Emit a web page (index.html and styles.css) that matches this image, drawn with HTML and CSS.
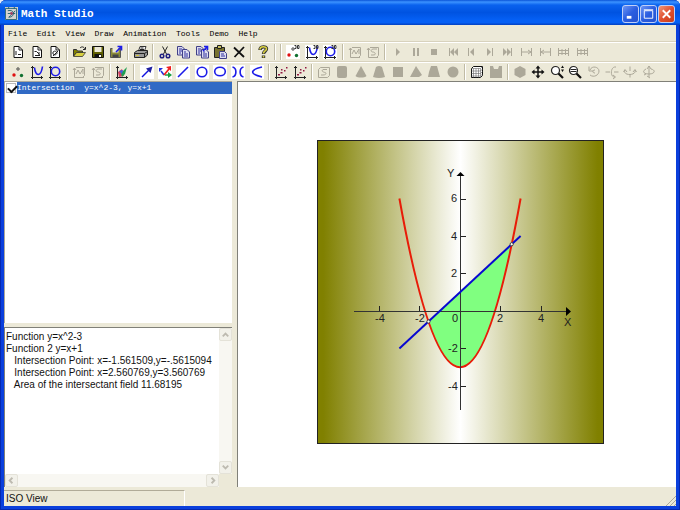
FILE: index.html
```html
<!DOCTYPE html>
<html lang="en">
<head>
  <meta charset="UTF-8">
  <meta name="viewport" content="width=device-width, initial-scale=1.0">
  <title>Math Studio</title>
  <link rel="stylesheet" href="styles.css">
</head>
<body>
  <!-- icon sprites -->
  <svg class="sprites" aria-hidden="true">
    <symbol id="page" viewBox="0 0 16 16"><path class="paper" d="M4 2.5h5l3.5 3.5v7.5H4z"/><path class="thin" d="M9 2.5v3.5h3.5"/></symbol>
    <symbol id="new" viewBox="0 0 16 16"><use href="#page"/><path d="M6 7v4M8 10.5h3" class="thin"/></symbol>
    <symbol id="new2" viewBox="0 0 16 16"><use href="#page"/><path d="M5.5 7.5h2l3 3M6 11.5h5M10 8v3" class="thin"/></symbol>
    <symbol id="new3" viewBox="0 0 16 16"><use href="#page"/><path d="M6 8c2-2 4 0 4 1s-2 3-4 1zM6 12l5-5" class="thin"/></symbol>
    <symbol id="open" viewBox="0 0 16 16"><path fill="#808000" stroke="#333" d="M2.5 12V5.5h3l1 1.5h5v2H5z"/><path fill="#d8d040" stroke="#333" stroke-width=".8" d="M2.5 12.5l3-4h9l-3 4z"/><path class="thin" d="M9 4c2-2 4-1 5 1M14.5 3v2.5H12"/></symbol>
    <symbol id="save" viewBox="0 0 16 16"><path fill="#606000" stroke="#111" d="M2.5 2.5h11v11h-11z"/><path fill="#ece9d8" d="M4.5 3h7v5h-7z"/><path fill="#111" d="M4.5 10h7v3.5h-7z"/><path fill="#fff" d="M9 11h2v2H9z"/></symbol>
    <symbol id="export" viewBox="0 0 16 16"><path fill="#8a8a38" stroke="#555" d="M2.5 4.5h10v9h-10z"/><path fill="#ece9d8" d="M4.5 4h6v4.5h-6z"/><path fill="#444" d="M4.5 10.5h6v3h-6z"/><path class="blue" d="M8 8l5-5M9.5 2.5h4v4"/></symbol>
    <symbol id="print" viewBox="0 0 16 16"><path fill="#fff" stroke="#333" d="M5.5 7l1.5-4.5h6L11.5 7"/><path fill="#999" stroke="#222" d="M1.5 8.5l3-2h10v4.5l-3 2.5h-10z"/><path d="M2 9.5h9.5l3-2M11.5 9.5v4M7.5 4h3M7 5.5h4" class="thin"/><path stroke="#d0c030" d="M3 11.5h3"/></symbol>
    <symbol id="cut" viewBox="0 0 16 16"><path stroke="#222" fill="none" d="M5.5 2.5l4 7.5M10.5 2.5L6.5 10"/><g class="navy"><circle cx="5" cy="12" r="1.8"/><circle cx="11" cy="12" r="1.8"/></g></symbol>
    <symbol id="copy" viewBox="0 0 16 16"><path class="sheet" d="M2.5 2.5H7L9.5 5v6h-7z"/><path class="sheet" d="M7.5 5.5H12L14.5 8v6h-7z"/><path class="navyline" d="M4 5h3M4 7h3M4 9h2M9 8h2M9 10h4M9 12h4"/></symbol>
    <symbol id="copyto" viewBox="0 0 16 16"><use href="#copy"/><path fill="#ece9d8" d="M10 0h6v5h-6z"/><path class="blue" d="M9 7l4-4M10 2.5h3.5V6"/></symbol>
    <symbol id="paste" viewBox="0 0 16 16"><path fill="#77722f" stroke="#222" d="M2.5 3.5h10v10h-10z"/><path fill="#c8c060" stroke="#222" d="M5.5 1.5h4v3h-4z"/><path class="sheet" d="M7.5 7.5h5l2 2v5h-7z"/><path class="navyline" d="M9 10h3M9 12h4"/></symbol>
    <symbol id="del" viewBox="0 0 16 16"><path fill="none" stroke="#111" stroke-width="1.8" d="M3 3.5l10 9.5M13 3L3.5 13"/></symbol>
    <symbol id="help" viewBox="0 0 16 16"><path fill="none" stroke="#333" stroke-width="3.4" d="M5 6c0-4 6.5-4 6.5-1.2C11.500 7.200 8.500 7 8.500 10M8.500 11.500v2.500"/><path fill="none" stroke="#d8d040" stroke-width="1.6" d="M5 5.500c0-3.500 6.500-3.500 6.500-.8C11.500 7 8.500 7 8.500 9.500M8.500 12v1.500"/></symbol>
    <symbol id="dots" viewBox="0 0 16 16"><circle cx="8" cy="5" r="1.2" fill="none" stroke="#444"/><circle cx="4" cy="11" r="1.7" fill="#e01010"/><circle cx="11.5" cy="11.5" r="1.7" fill="#107030"/></symbol>
    <symbol id="axes" viewBox="0 0 16 16"><path fill="none" stroke="#222" d="M3.5 2v11.5H14M2 3.5h3M12.5 12v3M2 13.5h1.500V15"/></symbol>
    <symbol id="curve" viewBox="0 0 16 16"><use href="#axes"/><path class="blue" d="M5.5 3.5c1 10 6.5 9 8-1"/></symbol>
    <symbol id="ring" viewBox="0 0 16 16"><use href="#axes"/><circle class="blue" cx="8.5" cy="7.5" r="4.2"/></symbol>
    <symbol id="d3" viewBox="0 0 16 16"><path stroke="#333" fill="none" d="M9.500 1.500h1.500v3H9.500M12.500 1.500v3h1.500v-3z"/></symbol>
    <symbol id="dots3" viewBox="0 0 16 16"><use href="#back"/><use href="#dots"/><use href="#d3"/></symbol>
    <symbol id="curve3" viewBox="0 0 16 16"><use href="#back"/><use href="#curve"/><use href="#d3"/></symbol>
    <symbol id="ring3" viewBox="0 0 16 16"><use href="#back"/><use href="#ring"/><use href="#d3"/></symbol>
    <symbol id="back" viewBox="0 0 16 16"><rect class="white" x="1" y="1" width="14" height="14"/></symbol>
    <symbol id="gaxis" viewBox="0 0 16 16"><path class="gline" d="M3.5 4v9.500H13M2 6l1.5-2L5 6M5 3.5h8.500v8M13.500 11.500l-2 2"/></symbol>
    <symbol id="gwave" viewBox="0 0 16 16"><use href="#gaxis"/><path class="gline" d="M5 10l2-4 2 4 3-5v5"/></symbol>
    <symbol id="gspiral" viewBox="0 0 16 16"><use href="#gaxis"/><path class="gline" d="M12 5H8c-3 1-2 3 0 3s4 3 0 3H6"/></symbol>
    <symbol id="surface" viewBox="0 0 16 16"><path fill="#d04060" d="M4 8l4-3 2 7-5 1z"/><path fill="#20a050" d="M7 9l6-6-2 7-3 3z"/><path fill="#4060e0" d="M5 7l4-1-1 4z"/><use href="#axes"/></symbol>
    <symbol id="vector" viewBox="0 0 16 16"><use href="#back"/><path stroke="#1010e0" stroke-width="1.4" d="M3 13l8-8"/><path fill="#2020a0" d="M13.5 2.5l-2 6.500-4.500-4.500z"/></symbol>
    <symbol id="vectors" viewBox="0 0 16 16"><use href="#back"/><path stroke="#18a040" stroke-width="1.5" d="M8 11h5"/><path fill="#18a040" d="M15 11l-4 3V8z"/><path stroke="#2030e0" stroke-width="1.5" d="M7 11L4 7"/><path fill="#2030e0" d="M2 4h4L2 8z"/><path stroke="#f02020" stroke-width="1.8" d="M7 11l5-6"/><path fill="#f02020" d="M14 2v5L9 3z"/></symbol>
    <symbol id="line" viewBox="0 0 16 16"><use href="#back"/><path class="blue" d="M3 13L13 3"/></symbol>
    <symbol id="circle" viewBox="0 0 16 16"><use href="#back"/><circle class="blue" cx="8" cy="8" r="4.8"/></symbol>
    <symbol id="ellipse" viewBox="0 0 16 16"><use href="#back"/><ellipse class="blue" cx="8" cy="7.5" rx="5.3" ry="4.3"/></symbol>
    <symbol id="hyper" viewBox="0 0 16 16"><use href="#back"/><path class="blue" d="M2.5 3c4.5 1 4.5 9 0 10M13.5 3c-4.500 1-4.500 9 0 10"/></symbol>
    <symbol id="para" viewBox="0 0 16 16"><use href="#back"/><path class="blue" d="M13 3C.5 6 .5 10 13 13"/></symbol>
    <symbol id="scatter" viewBox="0 0 16 16"><use href="#axes"/><path fill="#901840" d="M5 10h2v1.500H5zM7.500 8h2v1.500h-2zM8 5h1.500v1.500H8zM11 6h1.500v1.500H11zM13 3h1.500v1.500H13z"/></symbol>
    <symbol id="play" viewBox="0 0 16 16"><path class="gfill" d="M6 4l4 4-4 4z"/></symbol>
    <symbol id="pause" viewBox="0 0 16 16"><path class="gfill" d="M5 4h2v8H5zM9 4h2v8H9z"/></symbol>
    <symbol id="stop" viewBox="0 0 16 16"><path class="gfill" d="M5 5h6v6H5z"/></symbol>
    <symbol id="first" viewBox="0 0 16 16"><path class="gfill" d="M4 4h1v8H4zM9 4v8L5 8zM13 4v8L9 8z"/></symbol>
    <symbol id="prev" viewBox="0 0 16 16"><path class="gfill" d="M5 4h1v8H5zM11 4v8L7 8z"/></symbol>
    <symbol id="next" viewBox="0 0 16 16"><path class="gfill" d="M10 4h1v8h-1zM5 4v8l4-4z"/></symbol>
    <symbol id="last" viewBox="0 0 16 16"><path class="gfill" d="M11 4h1v8h-1zM3 4v8l4-4zM7 4v8l4-4z"/></symbol>
    <symbol id="toend" viewBox="0 0 16 16"><path class="gline" d="M3.5 4v8M13.5 4v8M4 8h9M10 6l3 2-3 2"/></symbol>
    <symbol id="tostart" viewBox="0 0 16 16"><path class="gline" d="M3.5 4v8M13.5 4v8M4 8h9M7 6L4 8l3 2"/></symbol>
    <symbol id="film" viewBox="0 0 16 16"><path class="gline" d="M3.5 4v8M13.5 4v8M3 6.5h11M3 9.5h11M7 5v6M10.5 5v6"/></symbol>
    <symbol id="gbox" viewBox="0 0 16 16"><path class="gline" d="M2.5 5.5l2-2h9v8l-2 2h-9zM11 5.500H7c-2 1.500 0 2.500 2 3s1 2.500-2 2.500H5"/></symbol>
    <symbol id="cyl" viewBox="0 0 16 16"><rect class="gfill" x="3" y="2" width="10" height="12" rx="2"/></symbol>
    <symbol id="cone" viewBox="0 0 16 16"><path class="gfill" d="M8 2l5.5 10c-2 2-9 2-11 0z"/></symbol>
    <symbol id="frustum" viewBox="0 0 16 16"><path class="gfill" d="M5 3q3-2 6 0l3 10q-6 2-12 0z"/></symbol>
    <symbol id="cube" viewBox="0 0 16 16"><path class="gfill" d="M3 3h10v10H3z"/></symbol>
    <symbol id="pyramid" viewBox="0 0 16 16"><path class="gfill" d="M8 2l6 9-3 2H2z"/></symbol>
    <symbol id="trap" viewBox="0 0 16 16"><path class="gfill" d="M5 2h6l3 11H2l1-5z"/></symbol>
    <symbol id="sphere" viewBox="0 0 16 16"><circle class="gfill" cx="8" cy="8" r="5.5"/></symbol>
    <symbol id="mesh" viewBox="0 0 16 16"><path fill="#fff" stroke="#111" d="M2.5 4.5l2-2h9v9l-2 2h-9z"/><path stroke="#666" stroke-width=".6" fill="none" d="M4.500 4.500v9M7 4.500v9M9.500 4.500v9M2.500 4.500h9v9M11.500 4.500l2-2M2.500 7h9l2-2M2.500 9.500h9l2-2M2.500 12h9l2-2"/></symbol>
    <symbol id="clip" viewBox="0 0 16 16"><path class="gfill" d="M2 2h3l1 3h4l1-3h3v12H2z"/></symbol>
    <symbol id="hex" viewBox="0 0 16 16"><path class="gfill" d="M8 2l5.5 3v6L8 14l-5.500-3V5z"/></symbol>
    <symbol id="move" viewBox="0 0 16 16"><path stroke="#111" stroke-width="1.5" d="M8 3v10M3 8h10"/><path fill="#111" d="M8 1.500l2.500 3h-5zM8 14.500l2.500-3h-5zM1.500 8l3-2.500v5zM14.500 8l-3-2.500v5z"/></symbol>
    <symbol id="lens" viewBox="0 0 16 16"><circle cx="6.5" cy="6.5" r="4" fill="#fff" stroke="#222" stroke-width="1.2"/><path stroke="#111" stroke-width="2.2" d="M9.5 9.5l4.500 4.500"/></symbol>
    <symbol id="zoom" viewBox="0 0 16 16"><use href="#lens"/><path fill="#111" d="M12 4l1.500-2.500L15 4zM12 5.500l1.500 2.500L15 5.500z"/></symbol>
    <symbol id="zoomout" viewBox="0 0 16 16"><use href="#lens"/><path stroke="#222" d="M3.5 5.5h6M3.5 7.5h6"/></symbol>
    <symbol id="undo" viewBox="0 0 16 16"><path class="gline" d="M4 6c2-5 9-3 9 1s-5 7-9 4M3 2.5V7h4.500M9 6c-3 0-3 3 0 3"/></symbol>
    <symbol id="rotx" viewBox="0 0 16 16"><path class="gline" d="M1.5 8H6M10 8h4.500M12 3C6 2 6 14 11 13M9 11l2.500 2L9 15"/></symbol>
    <symbol id="roty" viewBox="0 0 16 16"><path class="gline" d="M8 2.500V7M8 10v3.500M3 6c-3 6 12 6 10 0M1.5 8L3 5.500 5 8M11 8l2-2.500L14.500 8"/></symbol>
    <symbol id="rotz" viewBox="0 0 16 16"><path class="gline" d="M8 2v11M8 2L6 5M8 2l2 3M5 5C1 7 2 10 8 10s7-4 2-5M6 12l3 2M3 11l2-1"/></symbol>
  </svg>

  <div class="window">
    <header class="titlebar">
      <svg class="app-icon" viewBox="0 0 14 14"><rect width="14" height="14" fill="#d4d4d0"/><path fill="none" stroke="#206070" d="M.5 13.5V1.5h12v12zM4 0v2M10 0v2M3 4c8-2 8 7 1 7 3-3 5-4 7-7M3 7h8"/><circle cx="7" cy="7" r="1.5" fill="#a04060"/></svg>
      <h1>Math Studio</h1>
      <div class="window-buttons">
        <button aria-label="Minimize"><svg viewBox="0 0 16 16"><path fill="#fff" d="M4 10h5v3H4z"/></svg></button>
        <button aria-label="Maximize"><svg viewBox="0 0 16 16"><path fill="none" stroke="#fff" d="M3.5 4.5h9v8h-9zM3 3.5h10"/></svg></button>
        <button class="close" aria-label="Close"><svg viewBox="0 0 16 16"><path stroke="#fff" stroke-width="2" d="M4 4l8 8M12 4l-8 8"/></svg></button>
      </div>
    </header>

    <nav class="menubar">
      <button>File</button>
      <button>Edit</button>
      <button>View</button>
      <button>Draw</button>
      <button>Animation</button>
      <button>Tools</button>
      <button>Demo</button>
      <button>Help</button>
    </nav>

    <div class="toolbar">
      <div class="tools main-tools">
        <button aria-label="New"><svg><use href="#new"/></svg></button>
        <button aria-label="New 2D"><svg><use href="#new2"/></svg></button>
        <button aria-label="New 3D"><svg><use href="#new3"/></svg></button>
        <i class="sep"></i>
        <button aria-label="Open"><svg><use href="#open"/></svg></button>
        <button aria-label="Save"><svg><use href="#save"/></svg></button>
        <button aria-label="Export"><svg><use href="#export"/></svg></button>
        <i class="sep"></i>
        <button aria-label="Print"><svg><use href="#print"/></svg></button>
        <i class="sep"></i>
        <button aria-label="Cut"><svg><use href="#cut"/></svg></button>
        <button aria-label="Copy"><svg><use href="#copy"/></svg></button>
        <button aria-label="Copy picture"><svg><use href="#copyto"/></svg></button>
        <button aria-label="Paste"><svg><use href="#paste"/></svg></button>
        <button aria-label="Delete"><svg><use href="#del"/></svg></button>
        <i class="sep"></i>
        <button aria-label="Help"><svg><use href="#help"/></svg></button>
        <i class="sep"></i>
        <i class="sep"></i>
        <button aria-label="3D point"><svg><use href="#dots3"/></svg></button>
        <button aria-label="3D function"><svg><use href="#curve3"/></svg></button>
        <button aria-label="3D parametric"><svg><use href="#ring3"/></svg></button>
        <i class="sep"></i>
        <button disabled aria-label="Space curve"><svg><use href="#gwave"/></svg></button>
        <button disabled aria-label="Space surface"><svg><use href="#gspiral"/></svg></button>
        <i class="sep"></i>
        <button disabled aria-label="Play"><svg><use href="#play"/></svg></button>
        <button disabled aria-label="Pause"><svg><use href="#pause"/></svg></button>
        <button disabled aria-label="Stop"><svg><use href="#stop"/></svg></button>
        <button disabled aria-label="First frame"><svg><use href="#first"/></svg></button>
        <button disabled aria-label="Previous frame"><svg><use href="#prev"/></svg></button>
        <button disabled aria-label="Next frame"><svg><use href="#next"/></svg></button>
        <button disabled aria-label="Last frame"><svg><use href="#last"/></svg></button>
        <button disabled aria-label="Forward"><svg><use href="#toend"/></svg></button>
        <button disabled aria-label="Backward"><svg><use href="#tostart"/></svg></button>
        <button disabled aria-label="Loop"><svg><use href="#film"/></svg></button>
        <button disabled aria-label="Frames"><svg><use href="#film"/></svg></button>
      </div>
    </div>

    <div class="toolbar">
      <div class="tools draw-tools">
        <button aria-label="Points"><svg><use href="#dots"/></svg></button>
        <button aria-label="Function"><svg><use href="#curve"/></svg></button>
        <button aria-label="Parametric"><svg><use href="#ring"/></svg></button>
        <i class="sep"></i>
        <button disabled aria-label="Wave"><svg><use href="#gwave"/></svg></button>
        <button disabled aria-label="Spiral"><svg><use href="#gspiral"/></svg></button>
        <i class="sep"></i>
        <button aria-label="Surface"><svg><use href="#surface"/></svg></button>
        <i class="sep"></i>
        <button aria-label="Vector"><svg><use href="#vector"/></svg></button>
        <button aria-label="Vectors"><svg><use href="#vectors"/></svg></button>
        <button aria-label="Line"><svg><use href="#line"/></svg></button>
        <button aria-label="Circle"><svg><use href="#circle"/></svg></button>
        <button aria-label="Ellipse"><svg><use href="#ellipse"/></svg></button>
        <button aria-label="Hyperbola"><svg><use href="#hyper"/></svg></button>
        <button aria-label="Parabola"><svg><use href="#para"/></svg></button>
        <i class="sep"></i>
        <button aria-label="Scatter"><svg><use href="#scatter"/></svg></button>
        <button aria-label="Fit"><svg><use href="#scatter"/></svg></button>
        <i class="sep"></i>
        <button disabled aria-label="Plane"><svg><use href="#gbox"/></svg></button>
        <button disabled aria-label="Cylinder"><svg><use href="#cyl"/></svg></button>
        <button disabled aria-label="Cone"><svg><use href="#cone"/></svg></button>
        <button disabled aria-label="Frustum"><svg><use href="#frustum"/></svg></button>
        <button disabled aria-label="Prism"><svg><use href="#cube"/></svg></button>
        <button disabled aria-label="Pyramid"><svg><use href="#pyramid"/></svg></button>
        <button disabled aria-label="Pyramid frustum"><svg><use href="#trap"/></svg></button>
        <button disabled aria-label="Sphere"><svg><use href="#sphere"/></svg></button>
        <i class="sep"></i>
        <button aria-label="Grid"><svg><use href="#mesh"/></svg></button>
        <button disabled aria-label="Clipping"><svg><use href="#clip"/></svg></button>
        <i class="sep"></i>
        <button disabled aria-label="Solid"><svg><use href="#hex"/></svg></button>
        <button aria-label="Move"><svg><use href="#move"/></svg></button>
        <button aria-label="Zoom"><svg><use href="#zoom"/></svg></button>
        <button aria-label="Zoom out"><svg><use href="#zoomout"/></svg></button>
        <button disabled aria-label="Rotate"><svg><use href="#undo"/></svg></button>
        <button disabled aria-label="Rotate X"><svg><use href="#rotx"/></svg></button>
        <button disabled aria-label="Rotate Y"><svg><use href="#roty"/></svg></button>
        <button disabled aria-label="Rotate Z"><svg><use href="#rotz"/></svg></button>
      </div>
    </div>

    <main class="workspace">
      <aside class="sidebar">
        <ul class="object-list">
          <li>
            <input type="checkbox" id="obj1" checked>
            <label for="obj1">Intersection  y=x^2-3, y=x+1</label>
          </li>
        </ul>
        <div class="output">
          <textarea readonly wrap="off" aria-label="Result">Function y=x^2-3
Function 2 y=x+1
   Intersection Point: x=-1.561509,y=-.5615094
   Intersection Point: x=2.560769,y=3.560769
   Area of the intersectant field 11.68195</textarea>
          <div class="scroll vertical">
            <button disabled aria-label="Up"><svg viewBox="0 0 12 12"><path d="M3 8l3-3 3 3"/></svg></button>
            <button disabled aria-label="Down"><svg viewBox="0 0 12 12"><path d="M3 4l3 3 3-3"/></svg></button>
          </div>
          <div class="scroll horizontal">
            <button disabled aria-label="Left"><svg viewBox="0 0 12 12"><path d="M7 3L4 6l3 3"/></svg></button>
            <button disabled aria-label="Right"><svg viewBox="0 0 12 12"><path d="M5 3l3 3-3 3"/></svg></button>
          </div>
        </div>
      </aside>

      <section class="canvas">
        <svg class="plot" viewBox="0 0 287 304">
          <defs>
            <linearGradient id="bg">
              <stop offset="0.02" stop-color="#808000"/>
              <stop offset="0.5" stop-color="#fff"/>
              <stop offset="0.98" stop-color="#808000"/>
            </linearGradient>
          </defs>
          <rect x="0.5" y="0.5" width="286" height="303" fill="url(#bg)" stroke="#222"/>
          <!-- area between the curves -->
          <path fill="#80ff80" d="M111.5 181.5Q153.1 302.2 194.7 104.2z"/>
          <path class="parabola" d="M82.4 58.5Q143 396 203.6 58.5"/>
          <path class="axis" d="M37 171.5h212M143.5 36v234"/>
          <path class="tick" d="M62.5 166v5M102.5 166v5M183.5 166v5M224.5 166v5M144 59.5h5M144 96.5h5M144 133.5h5M144 208.5h5M144 246.5h5"/>
          <path d="M249 167l5 4.5-5 4.5zM139.5 36l4-4 4 4z"/>
          <path class="straight" d="M82.4 208.5L203.6 96"/>
          <g class="point">
            <circle cx="111.5" cy="181.5" r="1.6"/>
            <circle cx="194.7" cy="104.2" r="1.6"/>
          </g>
          <g class="labels">
            <text x="130" y="37">Y</text>
            <text x="247" y="186">X</text>
            <text x="58" y="182">-4</text>
            <text x="98" y="182">-2</text>
            <text x="135" y="182">0</text>
            <text x="180" y="182">2</text>
            <text x="221" y="182">4</text>
            <text x="134" y="62">6</text>
            <text x="134" y="100">4</text>
            <text x="134" y="137">2</text>
            <text x="131" y="212">-2</text>
            <text x="131" y="250">-4</text>
          </g>
        </svg>
      </section>
    </main>

    <footer class="statusbar">
      <span class="panel">ISO View</span>
      <svg class="grip" viewBox="0 0 12 12"><path d="M2 12L12 2M6 12l6-6M10 12l2-2"/></svg>
    </footer>
  </div>
</body>
</html>
```
FILE: styles.css
```css
* {
  box-sizing: border-box;
}

body {
  margin: 0;
  background: #e4ecf8;
  color: #111;
  font-family: "Liberation Sans", Arial, sans-serif;
  font-size: 10px;
}

button {
  margin: 0;
  padding: 0;
  border: 0;
  background: none;
  color: inherit;
  font: inherit;
}

.sprites {
  position: absolute;
  width: 0;
  height: 0;
}

.window {
  display: flex;
  flex-direction: column;
  min-height: 100vh;
  padding: 0 4px 4px;
  background: #0a3fdc;
  border-radius: 6px 6px 0 0;
  box-shadow: inset 0 0 0 1px #0528b0;
}

/* title bar */
.titlebar {
  display: flex;
  align-items: center;
  height: 25px;
  margin: 0 -4px;
  padding: 2px 5px 0;
  border-radius: 6px 6px 0 0;
  background: linear-gradient(#0a54d8, #3c93ff 8%, #0a62ee 20%, #0053e1 50%, #0560f5 80%, #0560f5 90%, #0340c0);
}

.app-icon {
  width: 13px;
  height: 13px;
}

.titlebar h1 {
  flex: 1;
  margin: 0 0 0 3px;
  color: #fff;
  font: bold 11px "Liberation Mono", "Courier New", monospace;
}

.window-buttons {
  display: flex;
  gap: 1px;
}

.window-buttons button {
  width: 17px;
  height: 18px;
  border: 1px solid #c0d0f8;
  border-radius: 3px;
  background: linear-gradient(135deg, #6d95f4, #2a5de0 50%, #2452d0);
}

.window-buttons .close {
  background: linear-gradient(135deg, #f09878, #e05030 50%, #c83c18);
}

.window-buttons svg {
  display: block;
  width: 15px;
  height: 16px;
}

/* menu and toolbars */
.menubar {
  display: flex;
  gap: 2ch;
  align-items: center;
  height: 16px;
  padding-left: 4px;
  background: #ece9d8;
  color: #000;
  font: 8px "Liberation Mono", "Courier New", monospace;
}

.toolbar {
  height: 20px;
  padding: 1px 5px 0;
  border-top: 1px solid #d8d2bd;
  background: #ece9d8;
  box-shadow: inset 0 1px #fff;
}

.tools {
  display: flex;
  align-items: center;
  height: 18px;
}

.main-tools {
  max-width: 582px;
}

.draw-tools {
  max-width: 649px;
}

.tools button {
  flex: 1;
  height: 16px;
}

.tools svg {
  display: block;
  width: 16px;
  height: 16px;
  margin: 0 auto;
}

.sep {
  width: 2px;
  height: 16px;
  margin: 0 2px;
  border-left: 1px solid #c0bba5;
  border-right: 1px solid #fff;
}

.paper {
  fill: #fff;
  stroke: #111;
}

.thin {
  fill: none;
  stroke: #222;
}

.blue {
  fill: none;
  stroke: #1c1ce8;
  stroke-width: 1.6;
}

.navy {
  fill: none;
  stroke: #202080;
  stroke-width: 1.5;
}

.navyline {
  stroke: #3030a0;
}

.sheet {
  fill: #dcdcf0;
  stroke: #404088;
}

.white {
  fill: #fff;
}

.gline {
  fill: none;
  stroke: #aca899;
}

.gfill {
  fill: #aca899;
}

/* work area */
.workspace {
  flex: 1;
  display: grid;
  grid-template-columns: 233fr 439fr;
  background: #ece9d8;
}

.sidebar {
  display: grid;
  grid-template-rows: 242fr 160fr;
  gap: 4px;
  padding-right: 5px;
}

.object-list {
  margin: 0;
  padding: 0;
  border: 1px solid #aca899;
  border-width: 1px 0 0 1px;
  background: #fff;
  list-style: none;
}

.object-list li {
  display: flex;
  align-items: center;
  height: 12px;
  font: 8px "Liberation Mono", "Courier New", monospace;
}

.object-list input {
  appearance: none;
  width: 10px;
  height: 10px;
  margin: 0 1px;
  border: 1px solid #bbb;
  background: #fff;
}

.object-list input:checked::after {
  content: "";
  display: block;
  width: 7px;
  height: 4px;
  margin: 1px;
  border: solid #111;
  border-width: 0 0 2px 2px;
  transform: rotate(-45deg);
}

.object-list label {
  flex: 1;
  height: 12px;
  line-height: 12px;
  background: #316ac5;
  color: #fff;
  white-space: pre;
}

.output {
  display: grid;
  grid-template-columns: 1fr 13px;
  grid-template-rows: 1fr 13px;
  border: 1px solid #808078;
  border-width: 1px 0 0 1px;
}

.output textarea {
  width: 100%;
  height: 100%;
  margin: 0;
  padding: 3px 0 0 1px;
  border: 0;
  outline: 0;
  resize: none;
  overflow: hidden;
  background: #fff;
  color: #111;
  font: 10px/12px "Liberation Sans", Arial, sans-serif;
}

.scroll {
  display: flex;
  justify-content: space-between;
  background: #f8f7f2;
}

.vertical {
  flex-direction: column;
}

.scroll button {
  width: 13px;
  height: 13px;
  border: 1px solid #e4e2d8;
  border-radius: 2px;
  background: #f2f1ea;
}

.scroll svg {
  display: block;
  width: 11px;
  height: 11px;
  fill: none;
  stroke: #bdbab0;
  stroke-width: 2;
}

.canvas {
  display: grid;
  place-items: center;
  padding: 14px 0 0 6px;
  border: 1px solid #808078;
  border-width: 1px 0 0 1px;
  background: #fff;
}

.plot {
  width: 287px;
  height: 304px;
}

.parabola,
.straight {
  fill: none;
  stroke: #e81c08;
  stroke-width: 2;
}

.straight {
  stroke: #0808d0;
}

.axis {
  stroke: #333;
}

.tick {
  stroke: #222;
}

.point {
  fill: #fff;
  stroke: #444;
}

.labels {
  fill: #222;
  font-size: 11px;
}

/* status bar */
.statusbar {
  display: flex;
  justify-content: space-between;
  align-items: flex-end;
  height: 19px;
  padding-top: 3px;
  background: #ece9d8;
}

.panel {
  width: 27%;
  height: 16px;
  padding-left: 2px;
  border: 1px solid #b0ab98;
  border-right-color: #fff;
  border-width: 1px 1px 0 0;
  line-height: 16px;
}

.grip {
  width: 12px;
  height: 12px;
  stroke: #aca899;
}
```
